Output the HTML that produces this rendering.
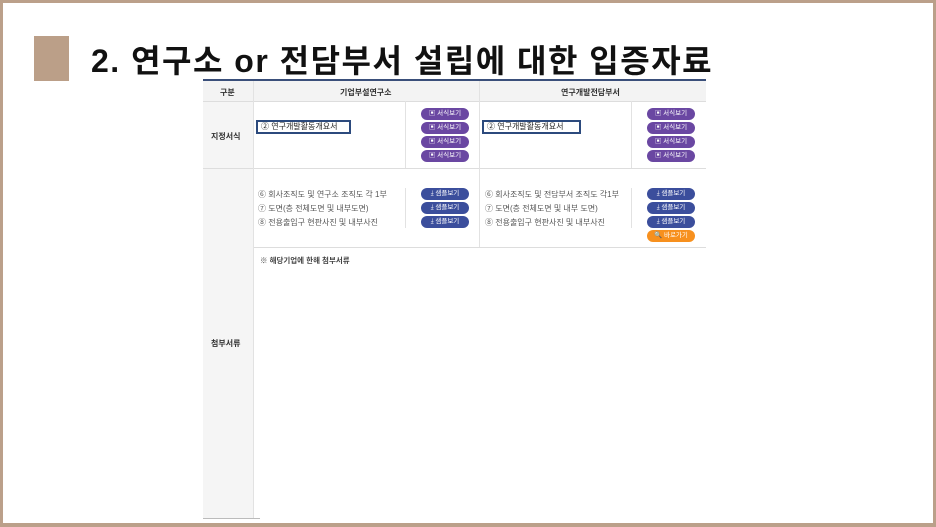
<!DOCTYPE html>
<html><head><meta charset="utf-8"><style>
*{margin:0;padding:0;box-sizing:border-box}
body{width:936px;height:527px;position:relative;background:#fff;font-family:"Liberation Sans","Noto Sans CJK KR",sans-serif;overflow:hidden}
.frame{position:absolute;left:0;top:0;width:936px;height:527px;border:3px solid #bba08a;border-bottom-width:4px}
.sq{position:absolute;left:34px;top:36px;width:35px;height:45px;background:#bb9f88}
.title{position:absolute;left:91px;top:36px;font-size:32px;font-weight:bold;color:#111;white-space:nowrap;letter-spacing:1.5px}
.a{position:absolute}
.t{position:absolute;font-size:8px;color:#333;white-space:nowrap}
.b{position:absolute;width:48px;height:12px;border-radius:6px;color:#fff;font-size:6.5px;line-height:12px;text-align:center}
.p{background:#6a47a2}.bl{background:#3b4e9c}.o{background:#f7901e}
.hl{position:absolute;height:1px;background:#ddd}
.vl{position:absolute;width:1px;background:#e2e2e2}
.box{position:absolute;border:2px solid #2c4a7d;height:14px;font-size:8px;line-height:10px;padding-left:3px;color:#222}
</style></head><body>
<div class="frame"></div>
<div class="sq"></div>
<div class="title">2. 연구소 or 전담부서 설립에 대한 입증자료</div>
<div class="a" style="left:203px;top:79px;width:503px;height:2px;background:#3a4f7a"></div>
<div class="a" style="left:203px;top:81px;width:503px;height:20px;background:#f3f3f3"></div>
<div class="a" style="left:203px;top:101px;width:50px;height:417px;background:#f5f5f5"></div>
<div class="hl" style="left:203px;top:101px;width:503px"></div>
<div class="hl" style="left:203px;top:168px;width:503px"></div>
<div class="hl" style="left:253px;top:247px;width:453px"></div>
<div class="hl" style="left:203px;top:518px;width:57px;background:#bbb"></div>
<div class="vl" style="left:253px;top:81px;height:437px"></div>
<div class="vl" style="left:479px;top:81px;height:166px"></div>
<div class="vl" style="left:405px;top:101px;height:67px"></div>
<div class="vl" style="left:631px;top:101px;height:67px"></div>
<div class="vl" style="left:405px;top:188px;height:40px"></div>
<div class="vl" style="left:631px;top:188px;height:40px"></div>
<div class="t" style="left:220px;top:87px;font-weight:bold">구분</div>
<div class="t" style="left:340px;top:87px;font-weight:bold">기업부설연구소</div>
<div class="t" style="left:561px;top:87px;font-weight:bold">연구개발전담부서</div>
<div class="t" style="left:211px;top:131px;font-weight:bold">지정서식</div>
<div class="t" style="left:211px;top:338px;font-weight:bold">첨부서류</div>
<div class="box" style="left:256px;top:120px;width:95px">② 연구개발활동개요서</div>
<div class="box" style="left:482px;top:120px;width:99px">② 연구개발활동개요서</div>
<div class="b p" style="left:421px;top:108px">▣ 서식보기</div>
<div class="b p" style="left:421px;top:122px">▣ 서식보기</div>
<div class="b p" style="left:421px;top:136px">▣ 서식보기</div>
<div class="b p" style="left:421px;top:150px">▣ 서식보기</div>
<div class="b p" style="left:647px;top:108px">▣ 서식보기</div>
<div class="b p" style="left:647px;top:122px">▣ 서식보기</div>
<div class="b p" style="left:647px;top:136px">▣ 서식보기</div>
<div class="b p" style="left:647px;top:150px">▣ 서식보기</div>
<div class="t" style="left:258px;top:189px;color:#555">⑥ 회사조직도 및 연구소 조직도 각 1부</div>
<div class="t" style="left:258px;top:203px;color:#555">⑦ 도면(층 전체도면 및 내부도면)</div>
<div class="t" style="left:258px;top:217px;color:#555">⑧ 전용출입구 현판사진 및 내부사진</div>
<div class="t" style="left:485px;top:189px;color:#555">⑥ 회사조직도 및 전담부서 조직도 각1부</div>
<div class="t" style="left:485px;top:203px;color:#555">⑦ 도면(층 전체도면 및 내부 도면)</div>
<div class="t" style="left:485px;top:217px;color:#555">⑧ 전용출입구 현판사진 및 내부사진</div>
<div class="b bl" style="left:421px;top:188px">⤓ 샘플보기</div>
<div class="b bl" style="left:421px;top:202px">⤓ 샘플보기</div>
<div class="b bl" style="left:421px;top:216px">⤓ 샘플보기</div>
<div class="b bl" style="left:647px;top:188px">⤓ 샘플보기</div>
<div class="b bl" style="left:647px;top:202px">⤓ 샘플보기</div>
<div class="b bl" style="left:647px;top:216px">⤓ 샘플보기</div>
<div class="b o" style="left:647px;top:230px">🔍 바로가기</div>
<div class="t" style="left:260px;top:255px;color:#444;font-weight:bold;font-size:7.5px">※ 해당기업에 한해 첨부서류</div>
</body></html>
